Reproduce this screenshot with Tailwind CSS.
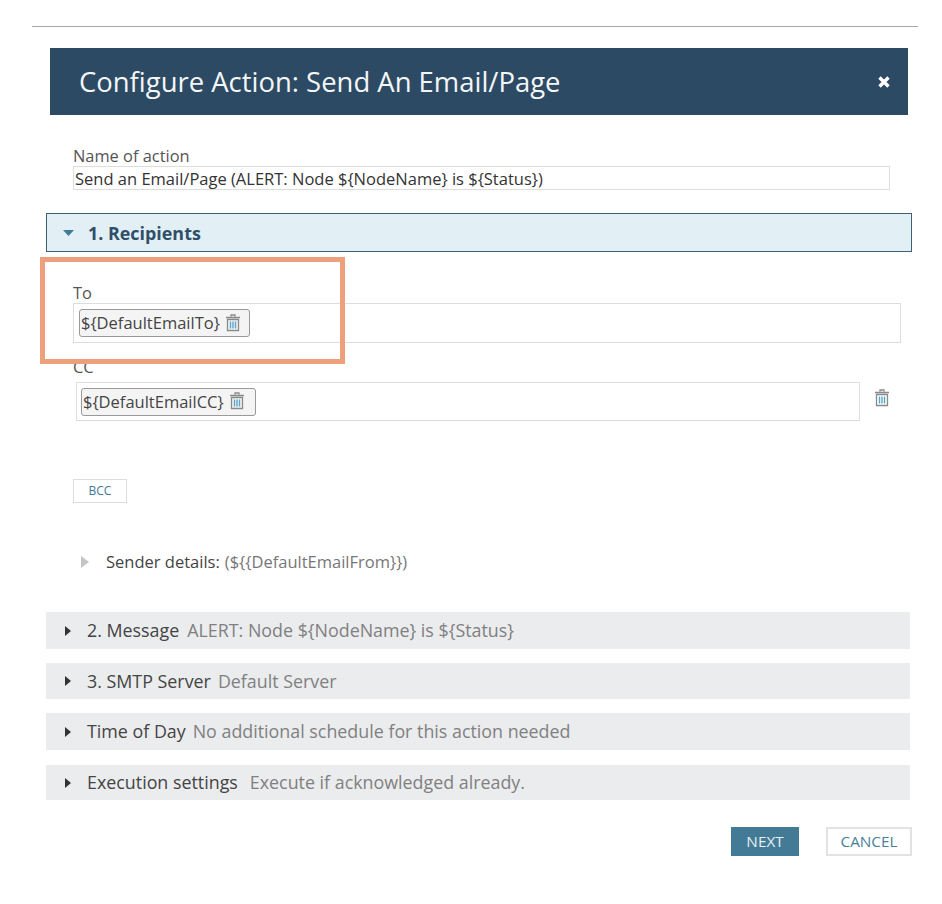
<!DOCTYPE html>
<html lang="en">
<head>
  <meta charset="UTF-8" />
  <title>Configure Action</title>
  <script src="https://cdn.jsdelivr.net/npm/@tailwindcss/browser@4"></script>
</head>
<body class="bg-white font-['Open_Sans',sans-serif] text-[#444] relative w-[942px] h-[904px] overflow-hidden">

  <div class="pt-[26px] pl-[32px]">
    <div class="w-[886px] h-[1px] bg-[#a8a8a8]"></div>
  </div>

  <!-- header -->
  <div class="ml-[50px] mt-[21px] w-[858px] h-[67px] bg-[#2c4a63] flex items-center justify-between pl-[29px] pr-[17px]">
    <h1 class="text-[27.45px] text-[#f4f6f8] leading-none">Configure Action: Send An Email/Page</h1>
    <svg width="14" height="14" viewBox="0 0 14 14"><path d="M2.5 2.5 L11.5 11.5 M11.5 2.5 L2.5 11.5" stroke="#fff" stroke-width="3.4"/></svg>
  </div>

  <!-- name -->
  <div class="ml-[73px] mt-[31px] w-[817px]">
    <label class="block text-[16.4px] leading-[20px] text-[#555]">Name of action</label>
    <div class="h-[24px] border border-[#ddd] pl-[1px] text-[16.5px] leading-[24px] text-[#333] whitespace-nowrap">Send an Email/Page (ALERT: Node ${NodeName} is ${Status})</div>
  </div>

  <!-- recipients -->
  <div class="ml-[46px] mt-[23px] w-[866px] h-[39px] bg-[#e2f0f6] border border-[#3f5f76] flex items-center pl-[16px] pt-[1px]">
    <svg width="11" height="6" viewBox="0 0 11 6"><path d="M0 0 H11 L5.5 6 Z" fill="#3f7a96"/></svg>
    <span class="ml-[14px] text-[17.9px] font-bold text-[#2f4f68]">1. Recipients</span>
  </div>

  <!-- to -->
  <div class="ml-[73px] mt-[31px] w-[828px]">
    <label class="block text-[16.4px] leading-[20px] text-[#555]">To</label>
    <div class="h-[40px] border border-[#ddd] flex items-center pl-[5px]">
      <div class="h-[28px] w-[171px] bg-[#f4f4f4] border border-[#999] rounded-[3px] flex items-center pl-[1px] pt-[1px] gap-[5px] text-[16.5px] text-[#444] whitespace-nowrap">
        <span>${DefaultEmailTo}</span>
        <svg class="-mt-[2px]" width="16" height="18" viewBox="0 0 16 18"><path d="M6 2.5 V1 H10 V2.5 M1 3.5 H15 M2.5 5.5 H13.5 V16.5 H2.5 Z" fill="none" stroke="#8a8a8a" stroke-width="1.3"/><path d="M5.5 7.5 V14.5 M8 7.5 V14.5 M10.5 7.5 V14.5" stroke="#5aa5cc" stroke-width="1.4"/></svg>
      </div>
    </div>
  </div>

  <!-- cc -->
  <div class="ml-[76px] mt-[14px] flex items-start">
    <div class="w-[784px]">
      <label class="block -ml-[3px] h-[25px] text-[16.4px] leading-[20px] text-[#555]">CC</label>
      <div class="h-[39px] border border-[#ddd] flex items-center pl-[4px]">
        <div class="h-[28px] w-[175px] bg-[#f4f4f4] border border-[#999] rounded-[3px] flex items-center pl-[1px] pt-[1px] gap-[5px] text-[16.5px] text-[#444] whitespace-nowrap">
          <span>${DefaultEmailCC}</span>
          <svg class="-mt-[2px]" width="16" height="18" viewBox="0 0 16 18"><path d="M6 2.5 V1 H10 V2.5 M1 3.5 H15 M2.5 5.5 H13.5 V16.5 H2.5 Z" fill="none" stroke="#8a8a8a" stroke-width="1.3"/><path d="M5.5 7.5 V14.5 M8 7.5 V14.5 M10.5 7.5 V14.5" stroke="#5aa5cc" stroke-width="1.4"/></svg>
        </div>
      </div>
    </div>
    <svg class="ml-[14px] mt-[32px]" width="16" height="18" viewBox="0 0 16 18"><path d="M6 2.5 V1 H10 V2.5 M1 3.5 H15 M2.5 5.5 H13.5 V16.5 H2.5 Z" fill="none" stroke="#8a8a8a" stroke-width="1.3"/><path d="M5.5 7.5 V14.5 M8 7.5 V14.5 M10.5 7.5 V14.5" stroke="#5aa5cc" stroke-width="1.4"/></svg>
  </div>

  <!-- bcc -->
  <div class="ml-[73px] mt-[58px] w-[54px] h-[24px] border border-[#ddd] flex items-center justify-center text-[12px] text-[#3f7a96]">BCC</div>

  <!-- sender -->
  <div class="ml-[81px] mt-[48px] h-[22px] flex items-center text-[16.5px]">
    <svg width="8" height="12" viewBox="0 0 8 12"><path d="M0 0 L8 6 L0 12 Z" fill="#c4c4c4"/></svg>
    <span class="ml-[17px] text-[#444]">Sender details:</span>
    <span class="ml-[5px] text-[#777]">(${{DefaultEmailFrom}})</span>
  </div>

  <!-- collapsed sections -->
  <div class="ml-[46px] mt-[39px] w-[864px] flex flex-col">
    <div class="h-[37px] bg-[#ebecee] flex items-center pl-[19px] text-[17.85px]">
      <svg width="6" height="10" viewBox="0 0 6 10"><path d="M0 0 L6 5 L0 10 Z" fill="#333"/></svg>
      <span class="ml-[16px] text-[#444]">2. Message</span>
      <span class="ml-[8px] text-[#808080]">ALERT: Node ${NodeName} is ${Status}</span>
    </div>
    <div class="mt-[14px] h-[36px] bg-[#ebecee] flex items-center pl-[19px] text-[17.85px]">
      <svg width="6" height="10" viewBox="0 0 6 10"><path d="M0 0 L6 5 L0 10 Z" fill="#333"/></svg>
      <span class="ml-[16px] text-[#444]">3. SMTP Server</span>
      <span class="ml-[7px] text-[#808080]">Default Server</span>
    </div>
    <div class="mt-[14px] h-[37px] bg-[#ebecee] flex items-center pl-[19px] text-[17.85px]">
      <svg width="6" height="10" viewBox="0 0 6 10"><path d="M0 0 L6 5 L0 10 Z" fill="#333"/></svg>
      <span class="ml-[16px] text-[#444]">Time of Day</span>
      <span class="ml-[7px] text-[#808080]">No additional schedule for this action needed</span>
    </div>
    <div class="mt-[15px] h-[35px] bg-[#ebecee] flex items-center pl-[19px] text-[17.85px]">
      <svg width="6" height="10" viewBox="0 0 6 10"><path d="M0 0 L6 5 L0 10 Z" fill="#333"/></svg>
      <span class="ml-[16px] text-[#444]">Execution settings</span>
      <span class="ml-[12px] text-[#808080]">Execute if acknowledged already.</span>
    </div>
  </div>

  <!-- buttons -->
  <div class="ml-[731px] mt-[27px] flex">
    <button class="w-[68px] h-[29px] bg-[#437a96] text-[#e8f0f4] text-[15.3px] flex items-center justify-center">NEXT</button>
    <button class="ml-[27px] w-[86px] h-[29px] border-2 border-[#e2e2e2] text-[#4a7f9a] text-[15.3px] flex items-center justify-center">CANCEL</button>
  </div>

  <!-- highlight box -->
  <div class="absolute left-[40px] top-[257px] w-[305px] h-[107px] border-[5px] border-[#ee9f7d]"></div>
</body>
</html>
